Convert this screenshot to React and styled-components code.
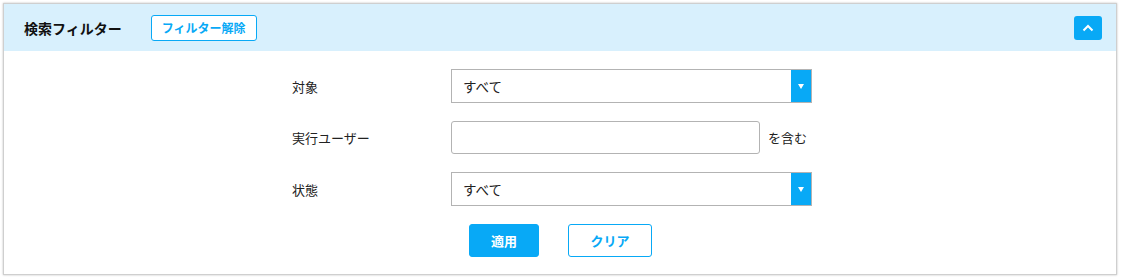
import React, { useState } from "react";
import styled, { createGlobalStyle } from "styled-components";

const GlobalStyle = createGlobalStyle`
  html, body {
    margin: 0;
    padding: 0;
    background: #fff;
  }
  body {
    font-family: "Noto Sans CJK JP", "Noto Sans", sans-serif;
    color: #222;
  }
`;

const BLUE = "#08a9f6";

const Panel = styled.section`
  margin: 3px 4px 3px 3px;
  border: 1px solid #cfcfcf;
  box-shadow: 0 0 2px rgba(0, 0, 0, 0.25);
  background: #fff;
`;

const Header = styled.header`
  display: flex;
  align-items: center;
  height: 47px;
  padding: 0 14px 0 20px;
  background: #d8f0fd;
`;

const Title = styled.h2`
  margin: 0 29px 0 0;
  font-size: 14px;
  font-weight: 700;
  color: #111;
`;

const OutlineButton = styled.button`
  display: inline-flex;
  align-items: center;
  justify-content: center;
  box-sizing: border-box;
  height: ${(p) => p.$h || 26}px;
  width: ${(p) => p.$w}px;
  padding: 0;
  border: 1px solid ${BLUE};
  border-radius: 3px;
  background: #fff;
  color: ${BLUE};
  font-family: inherit;
  font-size: ${(p) => p.$fs || 12}px;
  font-weight: 700;
  cursor: pointer;
`;

const SolidButton = styled(OutlineButton)`
  background: ${BLUE};
  color: #fff;
`;

const ToggleButton = styled.button`
  margin-left: auto;
  width: 28px;
  height: 24px;
  padding: 0;
  border: 0;
  border-radius: 3px;
  background: ${BLUE};
  display: flex;
  align-items: center;
  justify-content: center;
  cursor: pointer;
`;

const Body = styled.div`
  padding: 18px 0 17px;
`;

const Form = styled.div`
  width: 542px;
  margin: 0 auto;
  display: grid;
  grid-template-columns: 162px 380px;
  row-gap: 18px;
  align-items: center;
`;

const Label = styled.label`
  padding-left: 3px;
  font-size: 13px;
  color: #222;
`;

const Field = styled.div`
  display: flex;
  align-items: center;
  gap: 8px;
`;

const SelectBox = styled.div`
  display: flex;
  box-sizing: border-box;
  width: 361px;
  height: 34px;
  border: 1px solid #b3b3b3;
  background: #fff;
`;

const Select = styled.select`
  flex: 1;
  appearance: none;
  border: 0;
  outline: none;
  background: transparent;
  padding: 0 0 0 11px;
  font-family: inherit;
  font-size: 13.5px;
  color: #222;
`;

const Arrow = styled.span`
  width: 20px;
  background: ${BLUE};
  display: flex;
  align-items: center;
  justify-content: center;
  &::after {
    content: "";
    border-left: 3.5px solid transparent;
    border-right: 3.5px solid transparent;
    border-top: 5px solid #fff;
    margin-top: 1px;
  }
`;

const TextInput = styled.input`
  box-sizing: border-box;
  width: 309px;
  height: 33px;
  border: 1px solid #b3b3b3;
  border-radius: 3px;
  padding: 0 10px;
  font-family: inherit;
  font-size: 13px;
  outline: none;
`;

const Suffix = styled.span`
  font-size: 13px;
  color: #222;
`;

const Actions = styled.div`
  display: flex;
  justify-content: center;
  gap: 29px;
  margin-top: 18px;
  padding-left: 1px;
`;

const Dropdown = ({ value, onChange }) => (
  <SelectBox>
    <Select value={value} onChange={(e) => onChange(e.target.value)}>
      <option value="all">すべて</option>
    </Select>
    <Arrow />
  </SelectBox>
);

export default function App() {
  const [target, setTarget] = useState("all");
  const [status, setStatus] = useState("all");
  const [user, setUser] = useState("");

  return (
    <>
      <GlobalStyle />
      <Panel>
        <Header>
          <Title>検索フィルター</Title>
          <OutlineButton $w={106}>フィルター解除</OutlineButton>
          <ToggleButton aria-label="折りたたむ">
            <svg width="12" height="8" viewBox="0 0 12 8">
              <path
                d="M1.5 6.5 L6 2 L10.5 6.5"
                fill="none"
                stroke="#fff"
                strokeWidth="2"
              />
            </svg>
          </ToggleButton>
        </Header>
        <Body>
          <Form>
            <Label>対象</Label>
            <Field>
              <Dropdown value={target} onChange={setTarget} />
            </Field>
            <Label>実行ユーザー</Label>
            <Field>
              <TextInput value={user} onChange={(e) => setUser(e.target.value)} />
              <Suffix>を含む</Suffix>
            </Field>
            <Label>状態</Label>
            <Field>
              <Dropdown value={status} onChange={setStatus} />
            </Field>
          </Form>
          <Actions>
            <SolidButton $w={70} $h={33} $fs={13}>適用</SolidButton>
            <OutlineButton $w={84} $h={33} $fs={13}>クリア</OutlineButton>
          </Actions>
        </Body>
      </Panel>
    </>
  );
}
